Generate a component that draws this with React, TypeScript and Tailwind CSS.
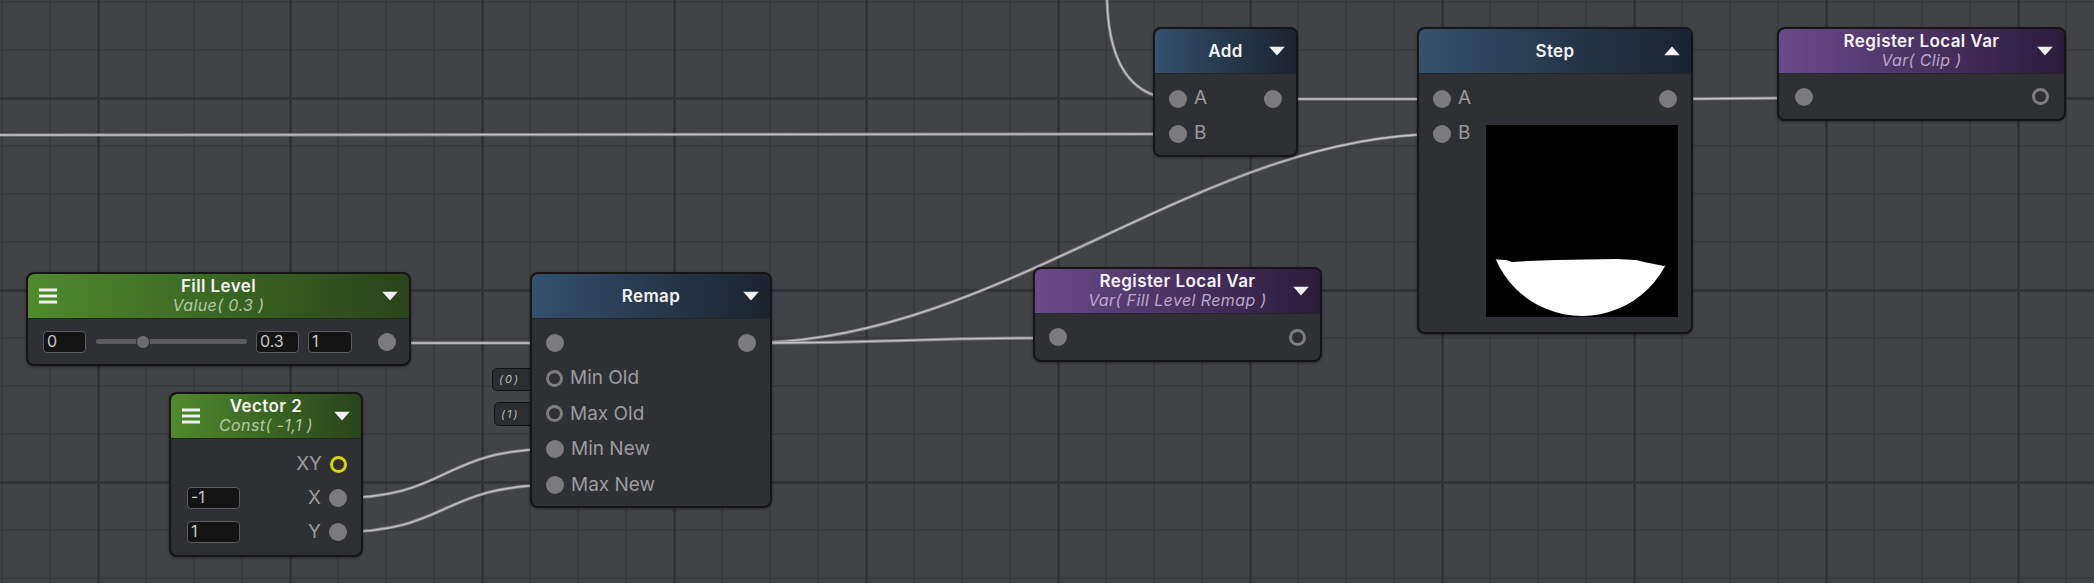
import React from 'react';

type Tone = 'green' | 'blue' | 'purple';

const headerTone: Record<Tone, string> = {
  green: 'bg-linear-to-r from-[#4f8b2d] to-[#294419]',
  blue: 'bg-linear-to-r from-[#34506b] to-[#1a2430]',
  purple: 'bg-linear-to-r from-[#6b4a8b] to-[#2c1c3c]',
};

const subTone: Record<Tone, string> = {
  green: 'text-[#b3c9a6]',
  blue: 'text-[#a9b4c0]',
  purple: 'text-[#b9a8c8]',
};

const Port = ({ kind = 'fill' }: { kind?: 'fill' | 'ring' | 'yellow' }) => {
  if (kind === 'ring') return <span className="block w-[17px] h-[17px] rounded-full border-[3px] border-[#7d7c7f] shrink-0" />;
  if (kind === 'yellow') return <span className="block w-[17px] h-[17px] rounded-full border-[3px] border-[#d8d600] shrink-0" />;
  return <span className="block w-[18px] h-[18px] rounded-full bg-[#7b7a7d] shrink-0" />;
};

const Field = ({ value, className }: { value: string; className: string }) => (
  <div className={`h-[22px] rounded-[4px] border-[1.5px] border-[#5c5c5e] bg-[#141415] px-[3px] text-[16px] leading-[19px] text-[#c9c9c9] ${className}`}>
    {value}
  </div>
);

const Arrow = ({ up }: { up?: boolean }) => (
  <svg width="16" height="9" viewBox="0 0 16 9" className="absolute right-[11px] top-1/2 -translate-y-1/2">
    {up ? <polygon points="0,9 16,9 8,0" fill="#f2f2f2" /> : <polygon points="0,0 16,0 8,9" fill="#f2f2f2" />}
  </svg>
);

const Menu = () => (
  <div className="absolute left-[11px] top-1/2 -translate-y-1/2 flex flex-col gap-[3px]">
    <span className="block w-[18px] h-[3px] bg-[#eeeeee]" />
    <span className="block w-[18px] h-[3px] bg-[#eeeeee]" />
    <span className="block w-[18px] h-[3px] bg-[#eeeeee]" />
  </div>
);

interface NodeProps {
  pos: string;
  tone: Tone;
  title: string;
  subtitle?: string;
  menu?: boolean;
  up?: boolean;
  children?: React.ReactNode;
}

const Node: React.FC<NodeProps> = ({ pos, tone, title, subtitle, menu, up, children }) => (
  <div className={`absolute flex flex-col rounded-[8px] border-2 border-[#151516] bg-[#2f3034] overflow-hidden shadow-[0_1px_3px_rgba(0,0,0,0.4)] ${pos}`}>
    <div className={`relative h-[45px] shrink-0 flex flex-col items-center justify-center border-b border-[#242528] rounded-t-[6px] ${headerTone[tone]}`}>
      {menu && <Menu />}
      <div className="text-[17px] leading-[19px] font-semibold tracking-[0.4px] text-[#f3f3f3]">{title}</div>
      {subtitle && (
        <div className={`text-[16px] leading-[19px] italic tracking-[0.4px] ${subTone[tone]}`}>{subtitle}</div>
      )}
      <Arrow up={up} />
    </div>
    <div className="flex-1 flex flex-col">{children}</div>
  </div>
);

const InRow = ({ label, kind, right, h }: { label?: string; kind?: 'fill' | 'ring'; right?: boolean; h: string }) => (
  <div className={`flex items-center pl-[14px] pr-[14px] ${h}`}>
    <Port kind={kind} />
    {label && <span className="ml-[7px] text-[19px] text-[#9c9c9e]">{label}</span>}
    {right && (
      <span className="ml-auto">
        <Port />
      </span>
    )}
  </div>
);

const Wire = ({ d }: { d: string }) => (
  <g fill="none" strokeLinecap="round">
    <path d={d} stroke="#88888a" strokeWidth="3.2" />
    <path d={d} stroke="#c4c4c5" strokeWidth="1.3" />
  </g>
);

export default function App() {
  return (
    <div className="relative w-[2094px] h-[583px] overflow-hidden bg-[#424347] font-['Inter','Noto_Sans',sans-serif]">
      {/* grid */}
      <svg className="absolute inset-0" width="2094" height="583">
        <defs>
          <pattern id="minor" x="1" y="1" width="48" height="48" patternUnits="userSpaceOnUse">
            <rect x="0" y="0" width="2" height="48" fill="#3a3b3e" />
            <rect x="0" y="0" width="48" height="2" fill="#3a3b3e" />
          </pattern>
          <pattern id="major" x="97" y="97" width="192" height="192" patternUnits="userSpaceOnUse">
            <rect x="0" y="0" width="3" height="192" fill="#323336" />
            <rect x="0" y="0" width="192" height="3" fill="#323336" />
          </pattern>
        </defs>
        <rect width="2094" height="583" fill="url(#minor)" />
        <rect width="2094" height="583" fill="url(#major)" />
      </svg>

      {/* wires */}
      <svg className="absolute inset-0" width="2094" height="583">
        <Wire d="M0 135 L1178 134" />
        <Wire d="M1107 0 C1109 75 1140 99 1178 99" />
        <Wire d="M1274 99 L1442 99" />
        <Wire d="M1668 99 L1802 98" />
        <Wire d="M747 343 C1000 343 1200 134 1442 134" />
        <Wire d="M747 343 C900 343 900 338 1058 338" />
        <Wire d="M387 343 L555 343" />
        <Wire d="M339 498 C450 498 440 449 555 449" />
        <Wire d="M339 532 C450 532 440 485 555 485" />
      </svg>

      {/* default value tabs on Remap */}
      <div className="absolute left-[492px] top-[368px] w-[42px] h-[23px] rounded-l-[5px] border border-[#111112] bg-[#2c2d31] flex items-center pl-[6px] text-[11px] italic tracking-[2px] text-[#bdbdbd]">(0)</div>
      <div className="absolute left-[494px] top-[402px] w-[40px] h-[24px] rounded-l-[5px] border border-[#111112] bg-[#2c2d31] flex items-center pl-[6px] text-[11px] italic tracking-[2px] text-[#bdbdbd]">(1)</div>

      {/* Fill Level */}
      <Node pos="left-[26px] top-[272px] w-[385px] h-[94px]" tone="green" title="Fill Level" subtitle="Value( 0.3 )" menu>
        <div className="flex-1 flex items-center pl-[15px] pr-[13px]">
          <Field value="0" className="w-[43px]" />
          <div className="relative ml-[10px] w-[151px] h-[14px] flex items-center">
            <div className="w-full h-[5px] rounded-full bg-[#5b5b5e]" />
            <div className="absolute left-[40px] top-0 w-[14px] h-[14px] rounded-full bg-[#6c6c6f] border border-[#2a2a2c]" />
          </div>
          <Field value="0.3" className="ml-[9px] w-[43px]" />
          <Field value="1" className="ml-[9px] w-[44px]" />
          <span className="ml-auto">
            <Port />
          </span>
        </div>
      </Node>

      {/* Vector 2 */}
      <Node pos="left-[169px] top-[392px] w-[194px] h-[165px]" tone="green" title="Vector 2" subtitle="Const( -1,1 )" menu>
        <div className="pt-[8px]">
          <div className="flex items-center justify-end h-[34px] pr-[14px]">
            <span className="mr-[8px] text-[19px] text-[#9c9c9e]">XY</span>
            <Port kind="yellow" />
          </div>
          <div className="flex items-center h-[34px] pl-[16px] pr-[14px]">
            <Field value="-1" className="w-[53px]" />
            <span className="ml-auto mr-[8px] text-[19px] text-[#9c9c9e]">X</span>
            <Port />
          </div>
          <div className="flex items-center h-[34px] pl-[16px] pr-[14px]">
            <Field value="1" className="w-[53px]" />
            <span className="ml-auto mr-[8px] text-[19px] text-[#9c9c9e]">Y</span>
            <Port />
          </div>
        </div>
      </Node>

      {/* Remap */}
      <Node pos="left-[530px] top-[272px] w-[242px] h-[236px]" tone="blue" title="Remap">
        <div className="pt-[6px]">
          <InRow h="h-[35.5px]" right />
          <InRow h="h-[35.5px]" kind="ring" label="Min Old" />
          <InRow h="h-[35.5px]" kind="ring" label="Max Old" />
          <InRow h="h-[35.5px]" label="Min New" />
          <InRow h="h-[35.5px]" label="Max New" />
        </div>
      </Node>

      {/* Register Local Var - Fill Level Remap */}
      <Node pos="left-[1033px] top-[267px] w-[289px] h-[95px]" tone="purple" title="Register Local Var" subtitle="Var( Fill Level Remap )">
        <div className="flex-1 flex items-center pl-[14px] pr-[14px]">
          <Port />
          <span className="ml-auto">
            <Port kind="ring" />
          </span>
        </div>
      </Node>

      {/* Add */}
      <Node pos="left-[1153px] top-[27px] w-[145px] h-[130px]" tone="blue" title="Add">
        <div className="pt-[7px]">
          <InRow h="h-[35px]" label="A" right />
          <InRow h="h-[35px]" label="B" />
        </div>
      </Node>

      {/* Step */}
      <Node pos="left-[1417px] top-[27px] w-[276px] h-[307px]" tone="blue" title="Step" up>
        <div className="pt-[7px]">
          <InRow h="h-[35px]" label="A" right />
          <div className="flex items-start">
            <InRow h="h-[35px]" label="B" />
            <div className="ml-auto mr-[13px] mt-[9px] w-[192px] h-[192px] bg-black">
              <svg width="192" height="192" viewBox="0 0 192 192">
                <defs>
                  <clipPath id="lvl">
                    <path d="M0 134 L20 135 L26 137 L42 136 L70 135 L130 134 L150 135 L158 137 L168 139 L178 141 L184 138 L192 136 V192 H0 Z" />
                  </clipPath>
                </defs>
                <circle cx="96" cy="97" r="94" fill="#ffffff" clipPath="url(#lvl)" />
              </svg>
            </div>
          </div>
        </div>
      </Node>

      {/* Register Local Var - Clip */}
      <Node pos="left-[1777px] top-[27px] w-[289px] h-[94px]" tone="purple" title="Register Local Var" subtitle="Var( Clip )">
        <div className="flex-1 flex items-center pl-[16px] pr-[15px]">
          <Port />
          <span className="ml-auto">
            <Port kind="ring" />
          </span>
        </div>
      </Node>
    </div>
  );
}
